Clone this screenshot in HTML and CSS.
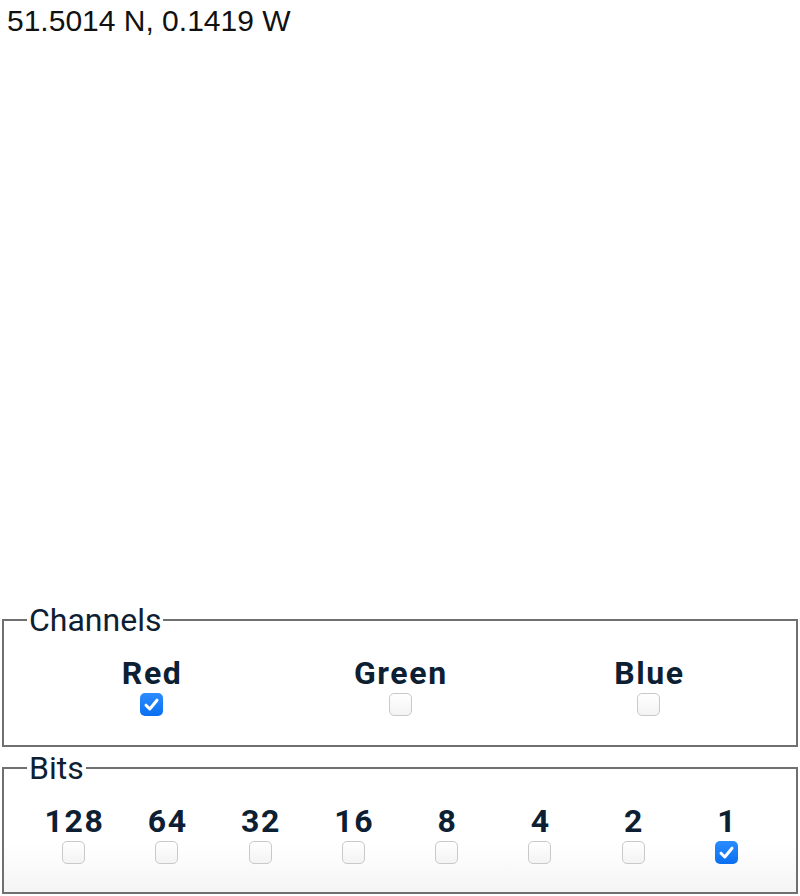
FILE: index.html
```html
<!DOCTYPE html>
<html>
<head>
<meta charset="utf-8">
<link rel="stylesheet" href="styles.css">
</head>
<body>
<div class="map">
  <div class="coords">51.5014 N, 0.1419 W</div>
</div>
<fieldset class="group channels">
  <legend>Channels</legend>
  <div class="row">
    <label class="opt"><span>Red</span><input type="checkbox" checked></label>
    <label class="opt"><span>Green</span><input type="checkbox"></label>
    <label class="opt"><span>Blue</span><input type="checkbox"></label>
  </div>
</fieldset>
<fieldset class="group bits">
  <legend>Bits</legend>
  <div class="row">
    <label class="opt"><span>128</span><input type="checkbox"></label>
    <label class="opt"><span>64</span><input type="checkbox"></label>
    <label class="opt"><span>32</span><input type="checkbox"></label>
    <label class="opt"><span>16</span><input type="checkbox"></label>
    <label class="opt"><span>8</span><input type="checkbox"></label>
    <label class="opt"><span>4</span><input type="checkbox"></label>
    <label class="opt"><span>2</span><input type="checkbox"></label>
    <label class="opt"><span>1</span><input type="checkbox" checked></label>
  </div>
</fieldset>
</body>
</html>
```
FILE: styles.css
```css
html, body {
  margin: 0;
  padding: 0;
  background: #ffffff;
}
body {
  font-family: Roboto, "Noto Sans", sans-serif;
  color: #0d2033;
}
.map {
  height: 601px;
}
.coords {
  padding: 4px 0 0 7px;
  font-family: "Liberation Sans", Arial, sans-serif;
  font-size: 30px;
  line-height: 34px;
  color: #111;
}
.group {
  margin: 0 2px 2px 2px;
  padding: 16px 23px 29px 23px;
  border: 2px solid #707070;
  min-width: 0;
}
.group legend {
  font-family: Roboto, sans-serif;
  font-size: 32px;
  padding: 0 2px;
  color: #0d2033;
}
.bits {
  padding-bottom: 28px;
  margin-bottom: 0;
  background: linear-gradient(to bottom, #ffffff 60%, #f5f5f5 100%);
}
.row {
  display: flex;
}
.opt {
  flex: 1 1 0;
  display: flex;
  flex-direction: column;
  align-items: center;
}
.opt span {
  font-size: 32px;
  font-weight: bold;
  letter-spacing: 0.05em;
  margin-right: -0.05em;
  line-height: 37.5px;
}
.opt input {
  -webkit-appearance: none;
  appearance: none;
  margin: 0.5px 0 0 0;
  width: 23px;
  height: 23px;
  border-radius: 5px;
  border: 1px solid #c9c9c9;
  background: linear-gradient(to bottom, #ffffff, #f3f3f3);
  box-sizing: border-box;
}
.opt input:checked {
  border: none;
  background-color: #0b74f5;
  background-image: url("data:image/svg+xml;utf8,<svg xmlns='http://www.w3.org/2000/svg' viewBox='0 0 23 23'><path d='M6 12.2 L9.8 16 L17 7.2' fill='none' stroke='white' stroke-width='3' stroke-linecap='round' stroke-linejoin='round'/></svg>"), linear-gradient(to bottom, #2b8cff, #0a6ff0);
}
```
